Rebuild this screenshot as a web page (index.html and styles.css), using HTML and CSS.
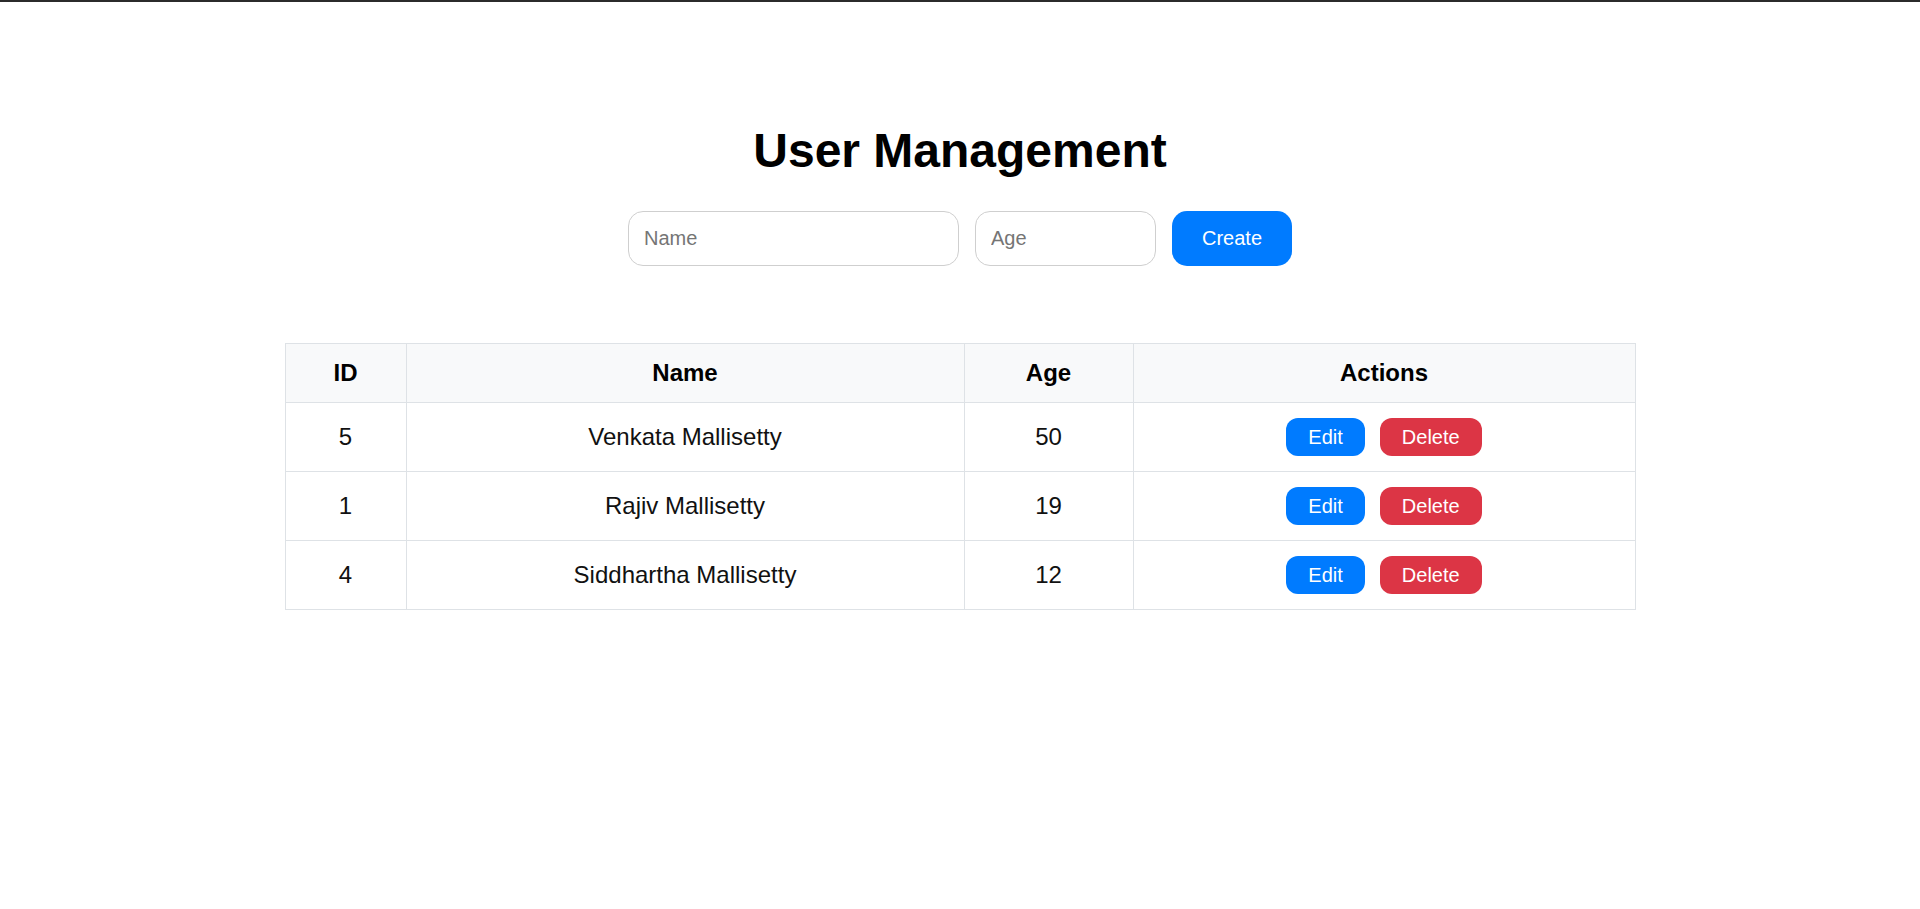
FILE: index.html
```html
<!DOCTYPE html>
<html lang="en">
<head>
<meta charset="utf-8">
<title>User Management</title>
<link rel="stylesheet" href="styles.css">
</head>
<body>
<div class="topbar"></div>
<main class="page">
  <h1 class="title">User Management</h1>
  <form class="create-form">
    <input class="field field-name" type="text" placeholder="Name">
    <input class="field field-age" type="text" placeholder="Age">
    <button type="button" class="btn btn-create">Create</button>
  </form>
  <table class="users">
    <colgroup>
      <col class="c-id"><col class="c-name"><col class="c-age"><col class="c-actions">
    </colgroup>
    <thead>
      <tr><th>ID</th><th>Name</th><th>Age</th><th>Actions</th></tr>
    </thead>
    <tbody>
      <tr>
        <td>5</td><td>Venkata Mallisetty</td><td>50</td>
        <td><div class="actions"><button class="btn btn-edit">Edit</button><button class="btn btn-delete">Delete</button></div></td>
      </tr>
      <tr>
        <td>1</td><td>Rajiv Mallisetty</td><td>19</td>
        <td><div class="actions"><button class="btn btn-edit">Edit</button><button class="btn btn-delete">Delete</button></div></td>
      </tr>
      <tr>
        <td>4</td><td>Siddhartha Mallisetty</td><td>12</td>
        <td><div class="actions"><button class="btn btn-edit">Edit</button><button class="btn btn-delete">Delete</button></div></td>
      </tr>
    </tbody>
  </table>
</main>
</body>
</html>
```
FILE: styles.css
```css
html, body {
  margin: 0;
  padding: 0;
  background: #fff;
}
body {
  font-family: "Liberation Sans", Arial, sans-serif;
  color: #000;
}
.topbar {
  height: 2px;
  background: #2b2b2b;
}
.page {
  display: flex;
  flex-direction: column;
  align-items: center;
  padding-top: 121px;
}
.title {
  margin: 0;
  font-size: 48px;
  line-height: 55px;
  font-weight: bold;
  color: #000;
}
.create-form {
  display: flex;
  gap: 16px;
  margin-top: 33px;
}
.field {
  box-sizing: border-box;
  height: 55px;
  border: 1px solid #cfcfcf;
  border-radius: 15px;
  padding: 0 15px;
  font-family: "Liberation Sans", Arial, sans-serif;
  font-size: 20px;
  color: #000;
  background: #fff;
  outline: none;
}
.field::placeholder {
  color: #757575;
}
.field-name { width: 331px; }
.field-age { width: 181px; }
.btn {
  box-sizing: border-box;
  border: none;
  font-family: "Liberation Sans", Arial, sans-serif;
  font-size: 20px;
  color: #fff;
  cursor: pointer;
}
.btn-create {
  width: 120px;
  height: 55px;
  border-radius: 15px;
  background: #007bff;
}
.users {
  margin-top: 77px;
  width: 1350px;
  border-collapse: collapse;
  table-layout: fixed;
  font-size: 24px;
}
.c-id { width: 121px; }
.c-name { width: 558px; }
.c-age { width: 169px; }
.c-actions { width: 502px; }
.users th, .users td {
  border: 1px solid #dee2e6;
  text-align: center;
  vertical-align: middle;
  padding: 0;
}
.users th {
  height: 58px;
  background: #f8f9fa;
  font-weight: bold;
  color: #000;
}
.users td {
  height: 68px;
  color: #111;
}
.actions {
  display: flex;
  justify-content: center;
  gap: 15px;
}
.btn-edit, .btn-delete {
  height: 38px;
  padding: 0 22px;
  border-radius: 12px;
}
.btn-edit { background: #007bff; }
.btn-delete { background: #dc3545; }
```
